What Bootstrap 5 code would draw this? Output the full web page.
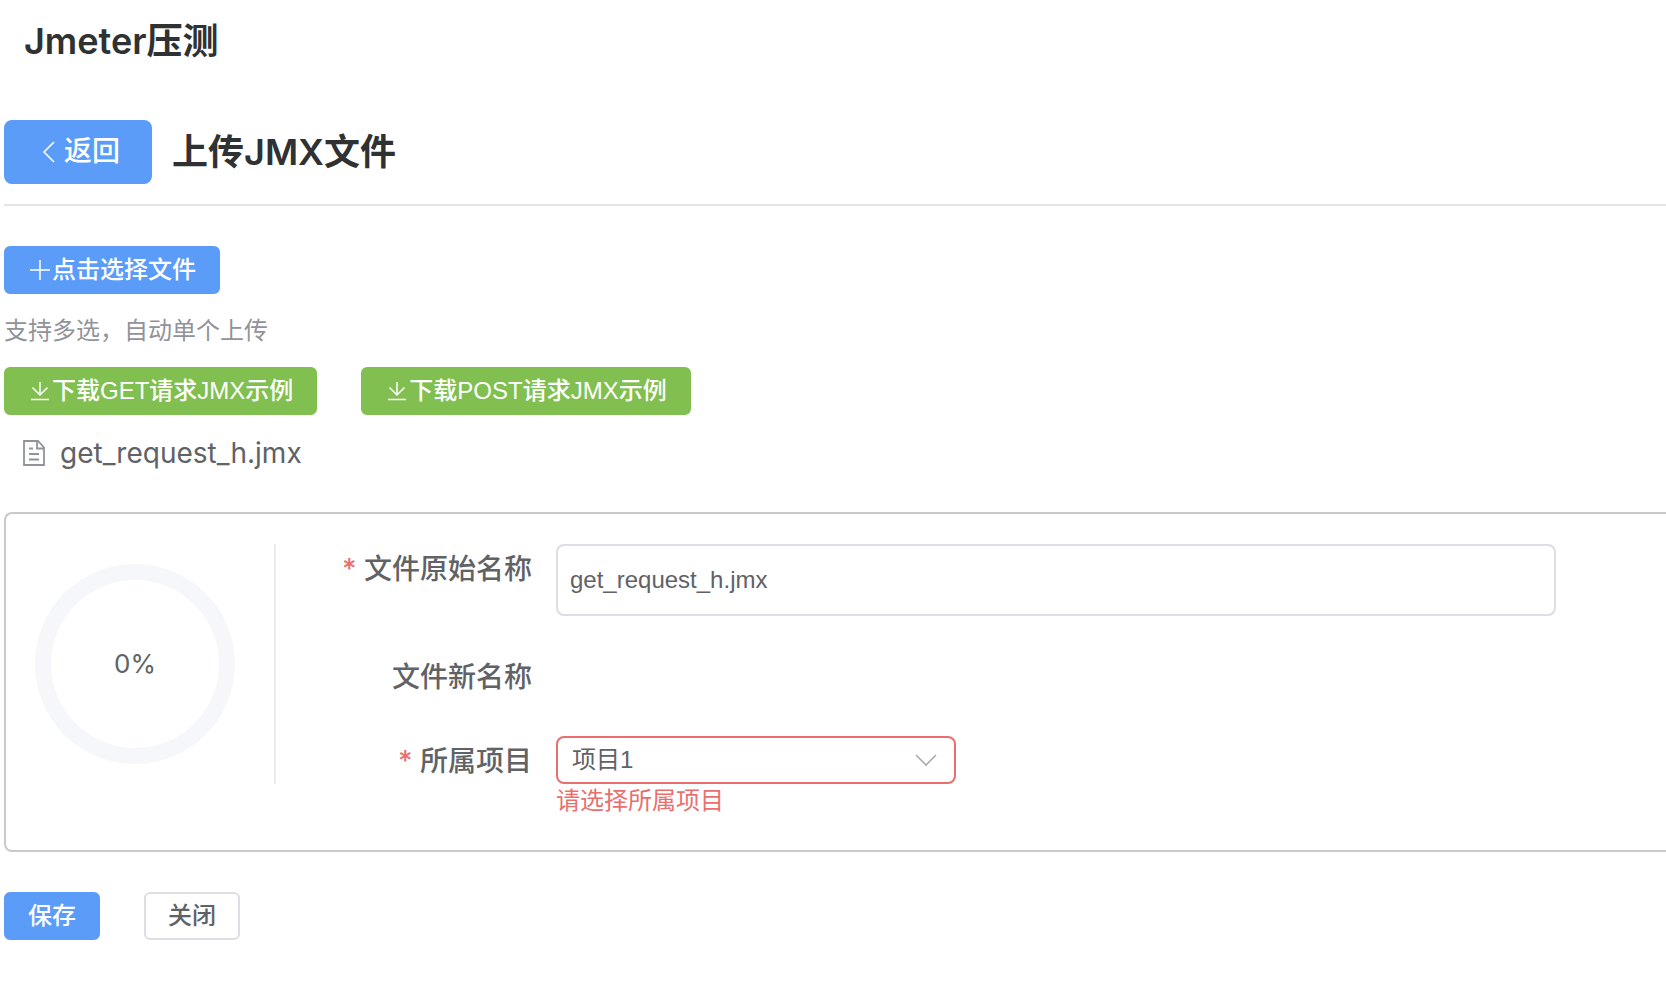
<!DOCTYPE html>
<html lang="zh-CN">
<head>
<meta charset="utf-8">
<meta name="viewport" content="width=device-width, initial-scale=1">
<title>Jmeter压测</title>
<link href="https://cdn.jsdelivr.net/npm/bootstrap@5.3.0/dist/css/bootstrap.min.css" rel="stylesheet">
<style>
  body { font-family: Inter, "Noto Sans CJK SC", sans-serif; font-size: 28px; line-height: 40px; color: #606266; background: #fff; }
  h1, h2 { font-size: 36px; line-height: 50px; font-weight: 600; color: #303133; }
  .site-head { padding: 16px 24px 54px; }
  .page-body { padding-left: 4px; }
  .btn { --bs-btn-border-width: 2px; --bs-btn-border-radius: 6px; --bs-btn-padding-x: 22px; --bs-btn-padding-y: 0;
    height: 48px; font-family: "Liberation Sans", "Noto Sans CJK SC", sans-serif; font-size: 24px; line-height: 44px; font-weight: 500; }
  .btn-primary { --bs-btn-bg: #5b9cf8; --bs-btn-border-color: #5b9cf8; }
  .btn-success { --bs-btn-bg: #80bf50; --bs-btn-border-color: #80bf50; }
  .btn-plain { --bs-btn-color: #606266; --bs-btn-border-color: #dcdde6; --bs-btn-hover-border-color: #5b9cf8; }
  .btn-back { --bs-btn-border-radius: 8px; --bs-btn-padding-x: 30px; height: 64px; font-size: 28px; }
  .head-row { gap: 20px; padding-bottom: 20px; border-bottom: 2px solid #e3e4eb; margin-bottom: 40px; }
  .btn-row { gap: 44px; }
  .hint { font-size: 24px; line-height: 36px; color: #909399; margin: 19px 0 18px; }
  .file-link { gap: 12px; padding: 18px 16px 0; margin-bottom: 39px; color: #606266; }
  .upload-card { border: 2px solid #c9c9c9; border-right: 0; border-radius: 8px 0 0 8px; padding: 30px 110px 30px 29px; margin-bottom: 40px; min-height: 340px; }
  .ring-box { width: 241px; height: 240px; padding-right: 39px; border-right: 2px solid #ebebed; }
  .ring { width: 200px; height: 200px; border: 16px solid #f5f7fb; border-radius: 50%; font-size: 26px; }
  .fields { gap: 36px; }
  .field-row { gap: 24px; }
  .field-label { width: 256px; line-height: 50px; height: 48px; font-weight: 500; text-align: right; }
  .required::before { content: "* "; color: #e86f6e; }
  .form-control, .form-select { border: 2px solid #dcdde6; border-radius: 8px; color: #606266; font-size: 24px; font-family: "Liberation Sans", "Noto Sans CJK SC", sans-serif; }
  .form-control { height: 72px; padding: 0 12px; }
  .picker { width: 400px; }
  .form-select { height: 48px; padding: 0 48px 0 14px; border-color: #e86f6e; background-size: 22px 22px; background-position: right 17px center;
    background-image: url("data:image/svg+xml,%3Csvg xmlns='http://www.w3.org/2000/svg' viewBox='0 0 22 22' fill='none' stroke='%23a8abb2' stroke-width='1.6'%3E%3Cpath d='M1 6l10 10L21 6'/%3E%3C/svg%3E"); }
  .error-text { font-size: 24px; line-height: 34px; color: #e86f6e; }
</style>
</head>
<body>
<header class="site-head"><h1 class="mb-0">Jmeter压测</h1></header>
<main class="page-body">
  <div class="head-row d-flex align-items-center">
    <button type="button" class="btn btn-primary btn-back d-inline-flex align-items-center">
      <svg width="28" height="28" viewBox="0 0 28 28" fill="none" stroke="currentColor" stroke-width="1.6" aria-hidden="true"><path d="M18 4L8 14l10 10"/></svg>
      返回
    </button>
    <h2 class="mb-0">上传JMX文件</h2>
  </div>

  <button type="button" class="btn btn-primary d-inline-flex align-items-center">
    <svg width="24" height="24" viewBox="0 0 24 24" fill="none" stroke="currentColor" stroke-width="1.5" aria-hidden="true"><path d="M2 12h20M12 2v20"/></svg>
    点击选择文件
  </button>
  <p class="hint">支持多选，自动单个上传</p>
  <div class="btn-row d-flex flex-wrap">
    <button type="button" class="btn btn-success d-inline-flex align-items-center">
      <svg width="24" height="24" viewBox="0 0 24 24" fill="none" stroke="currentColor" stroke-width="1.5" aria-hidden="true"><path d="M3 20.500h18M12 3v13M4.500 8.500L12 16l7.500-7.500"/></svg>
      下载GET请求JMX示例
    </button>
    <button type="button" class="btn btn-success d-inline-flex align-items-center">
      <svg width="24" height="24" viewBox="0 0 24 24" fill="none" stroke="currentColor" stroke-width="1.5" aria-hidden="true"><path d="M3 20.500h18M12 3v13M4.500 8.500L12 16l7.500-7.500"/></svg>
      下载POST请求JMX示例
    </button>
  </div>
  <a href="#" class="file-link d-flex align-items-center text-decoration-none">
    <svg width="28" height="28" viewBox="0 0 28 28" fill="none" stroke="#909399" stroke-width="1.8" aria-hidden="true"><path d="M4 2h14l6 6.500V26H4zM17 2v7.500h7M9 9.500h4M9 15h10M9 20.500h10"/></svg>
    get_request_h.jmx
  </a>

  <form>
    <section class="upload-card d-flex">
      <div class="ring-box d-flex align-items-center flex-shrink-0">
        <div class="ring d-flex align-items-center justify-content-center" role="progressbar" aria-valuenow="0" aria-valuemin="0" aria-valuemax="100" aria-label="上传进度">0%</div>
      </div>
      <div class="fields flex-grow-1 d-flex flex-column">
        <div class="field-row d-flex">
          <label class="field-label required flex-shrink-0" for="origName">文件原始名称</label>
          <input class="form-control" id="origName" type="text" value="get_request_h.jmx">
        </div>
        <div class="field-row d-flex">
          <span class="field-label flex-shrink-0">文件新名称</span>
        </div>
        <div class="field-row d-flex">
          <label class="field-label required flex-shrink-0" for="project">所属项目</label>
          <div class="picker">
            <select class="form-select" id="project" aria-describedby="projectError"><option>项目1</option></select>
            <div class="error-text" id="projectError">请选择所属项目</div>
          </div>
        </div>
      </div>
    </section>
    <div class="btn-row d-flex">
      <button type="submit" class="btn btn-primary">保存</button>
      <button type="button" class="btn btn-plain">关闭</button>
    </div>
  </form>
</main>
<script src="https://cdn.jsdelivr.net/npm/bootstrap@5.3.0/dist/js/bootstrap.bundle.min.js"></script>
</body>
</html>
